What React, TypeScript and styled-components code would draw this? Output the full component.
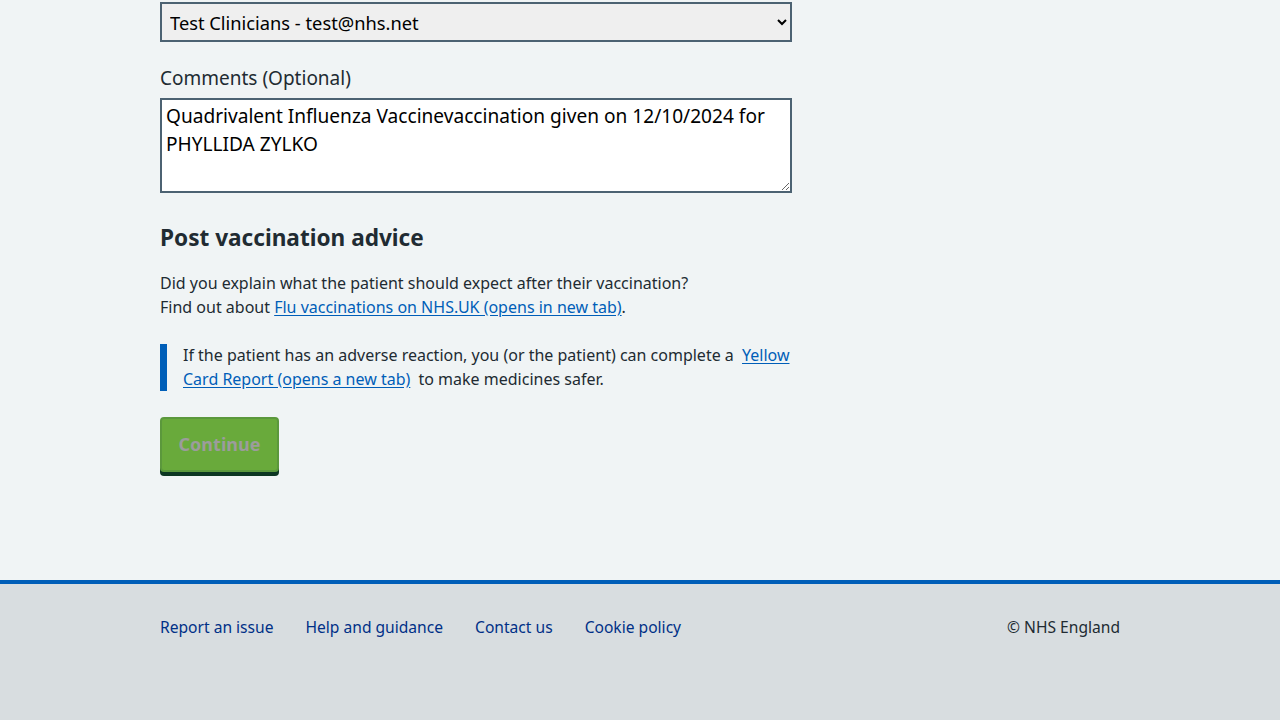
import React from "react";
import styled, { createGlobalStyle } from "styled-components";

const Global = createGlobalStyle`
  html, body { margin: 0; padding: 0; background: #f0f4f5; }
  body { font-family: "Noto Sans", "Liberation Sans", sans-serif; color: #212b32; }
  * { box-sizing: border-box; }
`;

const Page = styled.div`
  min-height: 720px;
  display: flex;
  flex-direction: column;
`;

const Main = styled.main`
  width: 960px;
  margin: 0 auto;
  padding-top: 2px;
  padding-bottom: 108px;
`;

const Column = styled.div`
  width: 632px;
  display: flex;
  flex-direction: column;
`;

const Select = styled.select`
  width: 632px;
  height: 40px;
  border: 2px solid #4c6272;
  border-radius: 0;
  background: #efefef;
  color: #000;
  font-family: inherit;
  font-size: 18.3px;
  padding: 0 4px;
  margin: 0;
`;

const Label = styled.label`
  display: block;
  margin-top: 24px;
  margin-bottom: 8px;
  font-size: 19px;
  line-height: 24px;
  color: #212b32;
`;

const TextArea = styled.textarea`
  width: 632px;
  height: 95px;
  border: 2px solid #4c6272;
  border-radius: 0;
  background: #fff;
  color: #000;
  font-family: inherit;
  font-size: 19.1px;
  line-height: 28px;
  padding: 2px 4px;
  margin: 0;
  display: block;
`;

const Heading = styled.h2`
  margin: 29px 0 17px;
  font-size: 22.6px;
  line-height: 32px;
  font-weight: 700;
  color: #212b32;
`;

const Para = styled.p`
  margin: 0;
  font-size: 16px;
  line-height: 24px;
`;

const Link = styled.a`
  color: #005eb8;
  text-decoration: underline;
  text-underline-offset: 2px;
`;

const InsetLink = styled(Link)`
  margin: 0 4px;
`;

const Inset = styled.div`
  margin-top: 25px;
  border-left: 7px solid #005eb8;
  padding-left: 16px;
  font-size: 16px;
  line-height: 23.5px;
`;

const ButtonRow = styled.div`
  margin-top: 26px;
`;

const Button = styled.button`
  background: #69aa3b;
  border: 2px solid #5b983c;
  border-radius: 4px;
  box-shadow: 0 4px 0 #0c3622;
  color: #9c9c9c;
  font-family: inherit;
  font-weight: 700;
  font-size: 18px;
  line-height: 24px;
  padding: 13px 16px 14px;
  width: 119px;
  cursor: not-allowed;
`;

const Footer = styled.footer`
  margin-top: auto;
  border-top: 4px solid #005eb8;
  background: #d8dde0;
  flex: 1;
  min-height: 136px;
`;

const FooterInner = styled.div`
  width: 960px;
  margin: 0 auto;
  padding-top: 31px;
  display: flex;
  justify-content: space-between;
  align-items: center;
  font-size: 15.6px;
  line-height: 24px;
`;

const FooterLinks = styled.ul`
  list-style: none;
  margin: 0;
  padding: 0;
  display: flex;
  gap: 32px;
`;

const FooterLink = styled.a`
  color: #003087;
  text-decoration: none;
`;

const Copyright = styled.span`
  color: #212b32;
`;

export default function App() {
  return (
    <Page>
      <Global />
      <Main>
        <Column>
          <Select defaultValue="t">
            <option value="t">Test Clinicians - test@nhs.net</option>
          </Select>
          <Label htmlFor="comments">Comments (Optional)</Label>
          <TextArea
            id="comments"
            defaultValue="Quadrivalent Influenza Vaccinevaccination given on 12/10/2024 for PHYLLIDA ZYLKO"
          />
          <Heading>Post vaccination advice</Heading>
          <Para>
            Did you explain what the patient should expect after their vaccination?
            <br />
            Find out about <Link href="#">Flu vaccinations on NHS.UK (opens in new tab)</Link>.
          </Para>
          <Inset>
            If the patient has an adverse reaction, you (or the patient) can complete a{" "}
            <InsetLink href="#">Yellow Card Report (opens a new tab)</InsetLink> to make medicines safer.
          </Inset>
          <ButtonRow>
            <Button disabled>Continue</Button>
          </ButtonRow>
        </Column>
      </Main>
      <Footer>
        <FooterInner>
          <FooterLinks>
            <li><FooterLink href="#">Report an issue</FooterLink></li>
            <li><FooterLink href="#">Help and guidance</FooterLink></li>
            <li><FooterLink href="#">Contact us</FooterLink></li>
            <li><FooterLink href="#">Cookie policy</FooterLink></li>
          </FooterLinks>
          <Copyright>© NHS England</Copyright>
        </FooterInner>
      </Footer>
    </Page>
  );
}
